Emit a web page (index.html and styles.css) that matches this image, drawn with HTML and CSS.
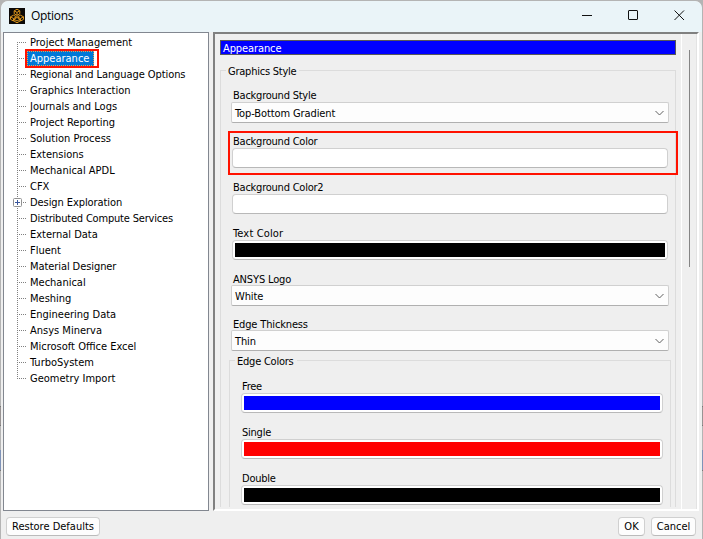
FILE: index.html
```
<!DOCTYPE html>
<html lang="en">
<head>
<meta charset="utf-8">
<title>Options</title>
<link rel="stylesheet" href="styles.css">
</head>
<body>
<div class="window">
  <header class="titlebar">
    <svg class="app-icon" width="16" height="16" viewBox="0 0 16 16">
      <rect width="16" height="16" fill="#0c0a08"/>
      <g fill="none" stroke="#d9931c" stroke-width="1" stroke-linejoin="round">
        <path d="M8 1.200l2.800 1.600v3L8 7.400 5.200 5.800v-3zM5.200 2.800L8 4.400l2.800-1.600M8 4.400v3"/>
        <path d="M4.500 7.200l3 1.600-3 1.700-3-1.700zM1.500 8.800v2.600l3 1.700v-2.600M11.500 7.200l3 1.600-3 1.700-3-1.700zM14.500 8.800v2.600l-3 1.700v-2.600"/>
        <path d="M8 9.500l3 1.700-3 1.800-3-1.800zM5 11.200v1.800l3 1.800 3-1.800v-1.800"/>
      </g>
    </svg>
    <span class="title">Options</span>
    <div class="controls">
      <svg width="46" height="30"><path d="M18 14.500h10"/></svg>
      <svg width="46" height="30"><rect x="18.500" y="9.500" width="9" height="9" rx="0.500"/></svg>
      <svg width="46" height="30"><path d="M18.500 9.500l9.500 9.500M28 9.500l-9.500 9.500"/></svg>
    </div>
  </header>
  <main class="body">
    <nav class="tree">
      <ul>
        <li><span>Project Management</span></li>
        <li><span class="selected">Appearance</span></li>
        <li><span class="tight">Regional and Language Options</span></li>
        <li><span>Graphics Interaction</span></li>
        <li><span>Journals and Logs</span></li>
        <li><span>Project Reporting</span></li>
        <li><span>Solution Process</span></li>
        <li><span>Extensions</span></li>
        <li><span>Mechanical APDL</span></li>
        <li><span>CFX</span></li>
        <li><svg class="expander" width="9" height="9"><rect x=".5" y=".5" width="8" height="8" rx="1" fill="#fff" stroke="#919191"/><path d="M2 4.500h5M4.500 2v5" stroke="#3a569c"/></svg><span class="tight">Design Exploration</span></li>
        <li><span class="tighter">Distributed Compute Services</span></li>
        <li><span>External Data</span></li>
        <li><span>Fluent</span></li>
        <li><span class="tight">Material Designer</span></li>
        <li><span>Mechanical</span></li>
        <li><span>Meshing</span></li>
        <li><span>Engineering Data</span></li>
        <li><span>Ansys Minerva</span></li>
        <li><span>Microsoft Office Excel</span></li>
        <li><span>TurboSystem</span></li>
        <li><span>Geometry Import</span></li>
      </ul>
    </nav>
    <section class="pane">
      <div class="content">
        <h2 class="heading">Appearance</h2>
        <div class="group">
          <div class="legend">Graphics Style</div>
          <div class="field"><label>Background Style</label><div class="combo">Top-Bottom Gradient<svg width="9" height="6"><path d="M.5 1l4 4 4-4"/></svg></div></div>
          <div class="field g11 marked"><label>Background Color</label><div class="swatch"></div></div>
          <div class="field g12"><label>Background Color2</label><div class="swatch"></div></div>
          <div class="field g12"><label class="wide">Text Color</label><div class="swatch black"></div></div>
          <div class="field g11"><label class="low">ANSYS Logo</label><div class="combo">White<svg width="9" height="6"><path d="M.5 1l4 4 4-4"/></svg></div></div>
          <div class="field g10"><label class="low">Edge Thickness</label><div class="combo">Thin<svg width="9" height="6"><path d="M.5 1l4 4 4-4"/></svg></div></div>
          <div class="group inner">
            <div class="legend">Edge Colors</div>
            <div class="field"><label>Free</label><div class="swatch blue"></div></div>
            <div class="field g12"><label>Single</label><div class="swatch red"></div></div>
            <div class="field g12"><label>Double</label><div class="swatch black"></div></div>
          </div>
        </div>
      </div>
      <div class="scrollbar"><div class="thumb"></div></div>
    </section>
  </main>
  <footer class="footer">
    <button class="restore">Restore Defaults</button>
    <button class="ok">OK</button>
    <button class="cancel">Cancel</button>
  </footer>
</div>
</body>
</html>
```
FILE: styles.css
```
*, *::before, *::after { box-sizing: border-box; }
body {
  margin: 0; width: 703px; height: 539px; overflow: hidden;
  background: linear-gradient(#b4b4b4 0 406px, #777 406px 407px, #989393 407px 425px, #777 425px 426px, #b4b4b4 426px 450px, #7f93b8 450px 470px, #777 470px 471px, #b4b4b4 471px);
  font: 11px/14px "DejaVu Sans Condensed", "DejaVu Sans", sans-serif;
  color: #000;
}
.window {
  height: 539px; display: flex; flex-direction: column;
  background: #efefef; background-clip: padding-box;
  border: 1px solid transparent; border-bottom: 0;
  border-radius: 8px 8px 0 0; overflow: hidden;
}
.titlebar {
  height: 31px; flex: none; display: flex; align-items: center;
  background: #eaf4f8; padding: 0 0 1px 8px; border-radius: 7px 7px 0 0;
}
.title { margin-left: 6px; font: 12px/16px "Open Sans", sans-serif; letter-spacing: -0.3px; }
.controls { margin-left: auto; display: flex; }
.controls svg { display: block; fill: none; stroke: #111; stroke-width: 1; }
.body { display: flex; height: 480px; flex: none; padding-left: 2px; }
.tree {
  width: 206px; height: 479px; background: #fff; border: 1px solid #828790;
}
.tree ul { list-style: none; margin: 1px 0 0; padding: 0; }
.tree li {
  position: relative; height: 16px; padding-left: 23px; display: flex; align-items: center;
  white-space: nowrap;
}
.tree li::before {
  content: ""; position: absolute; left: 13px; top: 0; width: 1px; height: 16px;
  background: repeating-linear-gradient(#808080 0 1px, transparent 1px 2px);
}
.tree li:first-child::before { top: 8px; height: 8px; }
.tree li:last-child::before { height: 9px; }
.tree li::after {
  content: ""; position: absolute; left: 13px; top: 8px; width: 9px; height: 1px;
  background: repeating-linear-gradient(90deg, #808080 0 1px, transparent 1px 2px);
}
.tree li span { padding: 0 3px; line-height: 15px; }
.tree .tight { letter-spacing: -0.08px; }
.tree .tighter { letter-spacing: -0.19px; }
.selected {
  position: relative; width: 67px; background: #0078d7; color: #fff;
  outline: 1px dotted #e8a050; outline-offset: -1px;
}
.selected::after {
  content: ""; position: absolute; left: -2px; top: -2px; width: 74px; height: 19px;
  border: 2px solid #ff1200; z-index: 2;
}
.expander { position: absolute; left: 9px; top: 4px; z-index: 1; }
.pane {
  display: flex; width: 486px; height: 479px; margin-left: 4px;
  border: 2px solid; border-color: #808080 #fff #fff #808080;
  letter-spacing: -0.23px;
}
.content { width: 466px; height: 473px; overflow: hidden; padding: 6px 9px 0 5px; }
.heading {
  margin: 0; width: 456px; height: 15px; border: 1px solid #585858; background: #00f; color: #fff;
  font: inherit; line-height: 15px; padding-left: 2px; letter-spacing: -0.1px;
}
.group {
  position: relative; width: 456px; height: 600px; margin-top: 15px; padding: 17px 6px 0 10px;
  border: 1px solid #dcdcdc;
}
.legend {
  position: absolute; left: 5px; top: -6px; padding: 0 3px 0 2px; background: #efefef;
}
.field { position: relative; }
.field label { display: block; height: 14px; line-height: 16px; padding-left: 2px; }
.field .wide { letter-spacing: 0.15px; }
.field .low { line-height: 18px; letter-spacing: -0.15px; }
.g10 { margin-top: 10px; }
.g11 { margin-top: 11px; }
.g12 { margin-top: 12px; }
.combo {
  height: 21px; display: flex; align-items: center; justify-content: space-between;
  background: #fdfdfd; border: 1px solid #d0d0d0; border-bottom-color: #b0b0b0;
  border-radius: 2px; padding: 2px 4px 0 3px; letter-spacing: -0.1px;
}
.combo svg { fill: none; stroke: #606060; margin-bottom: 1px; }
.swatch {
  height: 20px; margin: 0 1px; background: #fff; border: 1px solid #d0d0d0;
  border-bottom-color: #b8b8b8; border-radius: 4px; padding: 2px;
}
.swatch::before { content: ""; display: block; height: 14px; background: #fff; }
.black::before { background: #000; }
.blue::before { background: #00f; }
.red::before { background: #f00; }
.marked::after {
  content: ""; position: absolute; left: -3px; top: -3px; width: 450px; height: 44px;
  border: 2px solid #ff1200; z-index: 2;
}
.group.inner { width: 442px; margin: 9px 0 0 -2px; padding: 18px 7px 0 10px; height: 220px; }
.inner .swatch { margin-right: 0; }
.scrollbar { width: 16px; border-left: 1px solid #fff; border-right: 1px solid #e3e3e3; padding: 16px 0 0 7px; }
.thumb { width: 1px; height: 217px; background: #858585; }
.footer { display: flex; align-items: flex-start; padding: 5px 6px 0 5px; }
.footer button {
  height: 19px; border: 1px solid #d0d0d0; border-bottom-color: #bbb; border-radius: 4px;
  background: #fdfdfd; font: inherit; padding: 0; color: #000; white-space: nowrap;
}
.restore { width: 94px; margin-right: auto; }
.ok { width: 27px; margin-right: 6px; }
.cancel { width: 45px; }
```
